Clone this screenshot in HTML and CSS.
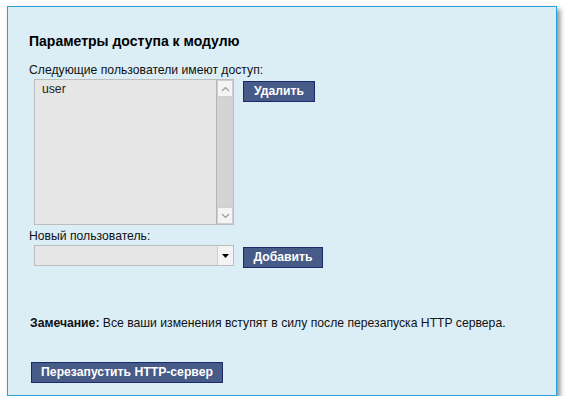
FILE: index.html
```html
<!DOCTYPE html>
<html>
<head>
<meta charset="utf-8">
<link rel="stylesheet" href="styles.css">
</head>
<body>
<div class="panel">
  <h2 class="title">Параметры доступа к модулю</h2>
  <div class="label">Следующие пользователи имеют доступ:</div>
  <div class="row">
    <div class="listbox">
      <div class="list-items"><div class="item">user</div></div>
      <div class="scrollbar">
        <div class="sb-btn"><svg width="9" height="6" viewBox="0 0 9 6"><path d="M1 5 L4.5 1.5 L8 5" fill="none" stroke="#9a9a9a" stroke-width="1.2"/></svg></div>
        <div class="sb-track"></div>
        <div class="sb-btn"><svg width="9" height="6" viewBox="0 0 9 6"><path d="M1 1 L4.5 4.5 L8 1" fill="none" stroke="#9a9a9a" stroke-width="1.2"/></svg></div>
      </div>
    </div>
    <button class="btn btn-del">Удалить</button>
  </div>
  <div class="label label-new">Новый пользователь:</div>
  <div class="row">
    <div class="select">
      <div class="select-value"></div>
      <div class="select-arrow"><svg width="7" height="4" viewBox="0 0 7 4"><path d="M0 0 H7 L3.5 4 Z" fill="#000"/></svg></div>
    </div>
    <button class="btn btn-add">Добавить</button>
  </div>
  <p class="note"><b>Замечание:</b> Все ваши изменения вступят в силу после перезапуска HTTP сервера.</p>
  <button class="btn btn-restart">Перезапустить HTTP-сервер</button>
</div>
</body>
</html>
```
FILE: styles.css
```css
html, body {
  margin: 0;
  padding: 0;
  background: #ffffff;
}
body {
  font-family: "Liberation Sans", Arial, sans-serif;
  color: #000;
}
.panel {
  box-sizing: border-box;
  margin: 6px 0 0 7px;
  width: 550px;
  height: 390px;
  border: 1px solid #2ba3da;
  background: #dbedf5;
  box-shadow: 3px 3px 5px rgba(0, 0, 0, 0.45);
  padding: 26px 0 0 21px;
}
.title {
  margin: 0;
  font-size: 14px;
  line-height: 16px;
  font-weight: bold;
}
.label {
  margin-top: 14px;
  font-size: 12.2px;
  line-height: 14px;
  color: #111;
}
.label-new {
  margin-top: 4px;
}
.row {
  display: flex;
  align-items: flex-start;
  margin-top: 2px;
  margin-left: 5px;
}
.listbox {
  box-sizing: border-box;
  width: 200px;
  height: 146px;
  border: 1px solid #bdbdbd;
  background: #e6e6e6;
  display: flex;
}
.list-items {
  flex: 1;
  padding: 2px 0 0 7px;
}
.item {
  font-size: 12.2px;
  line-height: 14px;
  color: #222;
}
.scrollbar {
  width: 16px;
  display: flex;
  flex-direction: column;
  border-left: 1px solid #b5b5b5;
  background: #d3d3d3;
}
.sb-btn {
  box-sizing: border-box;
  height: 17px;
  background: #f4f4f4;
  border: 1px solid #cfcfcf;
  display: flex;
  align-items: center;
  justify-content: center;
}
.sb-track {
  flex: 1;
}
.btn {
  box-sizing: border-box;
  height: 21px;
  margin: 2px 0 0 9px;
  padding: 0;
  border: 1px solid #1d2a6a;
  background: #475b88;
  color: #ffffff;
  font-family: "Liberation Sans", Arial, sans-serif;
  font-size: 12.2px;
  font-weight: bold;
  line-height: 19px;
  text-align: center;
}
.btn-del { width: 72px; }
.btn-add { width: 80px; }
.select {
  box-sizing: border-box;
  width: 200px;
  height: 21px;
  border: 1px solid #bdbdbd;
  background: #e6e6e6;
  display: flex;
}
.select-value { flex: 1; }
.select-arrow {
  box-sizing: border-box;
  width: 16px;
  background: #f4f4f4;
  border-left: 1px solid #cfcfcf;
  display: flex;
  align-items: center;
  justify-content: center;
}
.note {
  margin: 48px 0 0 1px;
  font-size: 12.2px;
  line-height: 14px;
  color: #111;
}
.btn-restart {
  display: block;
  width: 192px;
  margin: 32px 0 0 2px;
}
```
